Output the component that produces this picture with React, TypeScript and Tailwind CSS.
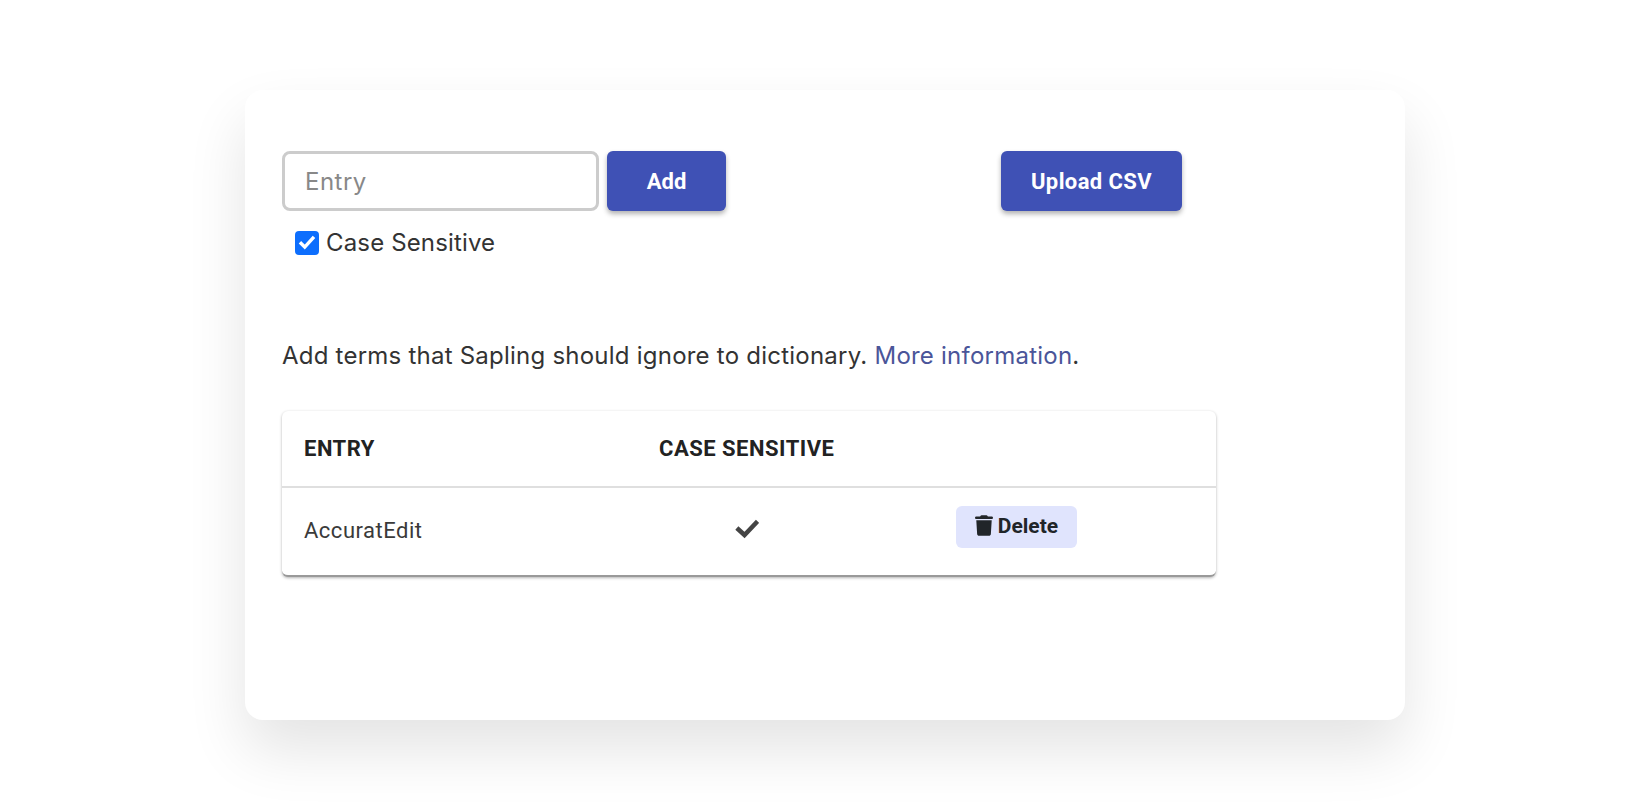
import React from "react";

export default function App() {
  return (
    <div className="w-[1650px] h-[810px] bg-white flex justify-center items-start pt-[90px] overflow-hidden font-['Roboto',sans-serif]">
      <div className="w-[1160px] h-[630px] bg-white rounded-[18px] shadow-[0_30px_60px_rgba(0,0,0,0.11)] px-[37px] pt-[61px]">
        <div className="flex items-start w-[900px]">
          <div className="flex flex-col">
            <div className="flex gap-2">
              <input readOnly placeholder="Entry" className="w-[317px] h-[60px] border-[3px] border-[#cccccc] rounded-lg px-[20px] font-['Inter',sans-serif] text-[24px] tracking-[0.5px] text-[#333] placeholder:text-[#888888] outline-none" />
              <button className="w-[119px] h-[60px] rounded-md bg-[#3f51b5] text-white text-[22px] font-bold shadow-[0_3px_5px_rgba(0,0,0,0.3)]">Add</button>
            </div>
            <label className="flex items-center ml-[13px] mt-[14px] gap-[7px] font-['Inter',sans-serif] text-[24px] tracking-[0.15px] text-[#333]">
              <span className="w-[24px] h-[24px] rounded-[4px] bg-[#0d6efd] flex items-center justify-center">
                <svg width="18" height="18" viewBox="0 0 20 20" fill="none" stroke="#fff" strokeWidth="3.8" strokeLinecap="square"><path d="m3.5 10.5 4 4L16.5 4.5" /></svg>
              </span>
              Case Sensitive
            </label>
          </div>
          <button className="ml-[275px] w-[184px] h-[60px] rounded-md bg-[#3f51b5] text-white text-[22px] font-bold tracking-[0.4px] shadow-[0_3px_5px_rgba(0,0,0,0.3)]">Upload CSV</button>
        </div>
        <p className="mt-[77px] font-['Inter',sans-serif] text-[24px] tracking-[0.23px] text-[#333]">
          Add terms that Sapling should ignore to dictionary. <a className="text-[#4a5599]">More information</a>.
        </p>
        <div className="mt-[37px] w-[934px] rounded-md bg-white shadow-[0_1px_3px_rgba(0,0,0,0.3)] border-b-2 border-[#999]">
          <div className="flex items-center h-[77px] border-b-2 border-[#dfdfdf] px-[22px] text-[22px] font-bold text-[#222] tracking-[0.5px]">
            <div className="w-[355px]">ENTRY</div>
            <div>CASE SENSITIVE</div>
          </div>
          <div className="flex items-start h-[87px] px-[22px]">
            <div className="mt-[26px] w-[431px] text-[22px] tracking-[0.5px] text-[#3a3a3a]">AccuratEdit</div>
            <svg className="mt-[31px]" width="24" height="20" viewBox="0 0 24 20" fill="none" stroke="#444" strokeWidth="4.5" strokeLinecap="square"><path d="m3.5 10.5 6 5.5L21 4" /></svg>
            <button className="mt-[18px] ml-[197px] w-[121px] h-[42px] rounded-md bg-[#e0e4fd] text-[21px] font-bold text-[#212529] flex items-center justify-center gap-[5px]">
              <svg className="mt-[-3px]" width="18" height="21" viewBox="0 0 448 512" fill="#212529"><path d="M135.2 17.7 128 32H32C14.3 32 0 46.3 0 64s14.3 32 32 32h384c17.7 0 32-14.3 32-32s-14.3-32-32-32h-96l-7.2-14.3C307.4 6.8 296.3 0 284.2 0H163.8c-12.1 0-23.2 6.8-28.6 17.7zM416 128H32l21.2 339c1.6 25.3 22.6 45 47.9 45h245.8c25.3 0 46.3-19.7 47.9-45L416 128z"/></svg>
              Delete
            </button>
          </div>
        </div>
      </div>
    </div>
  );
}
